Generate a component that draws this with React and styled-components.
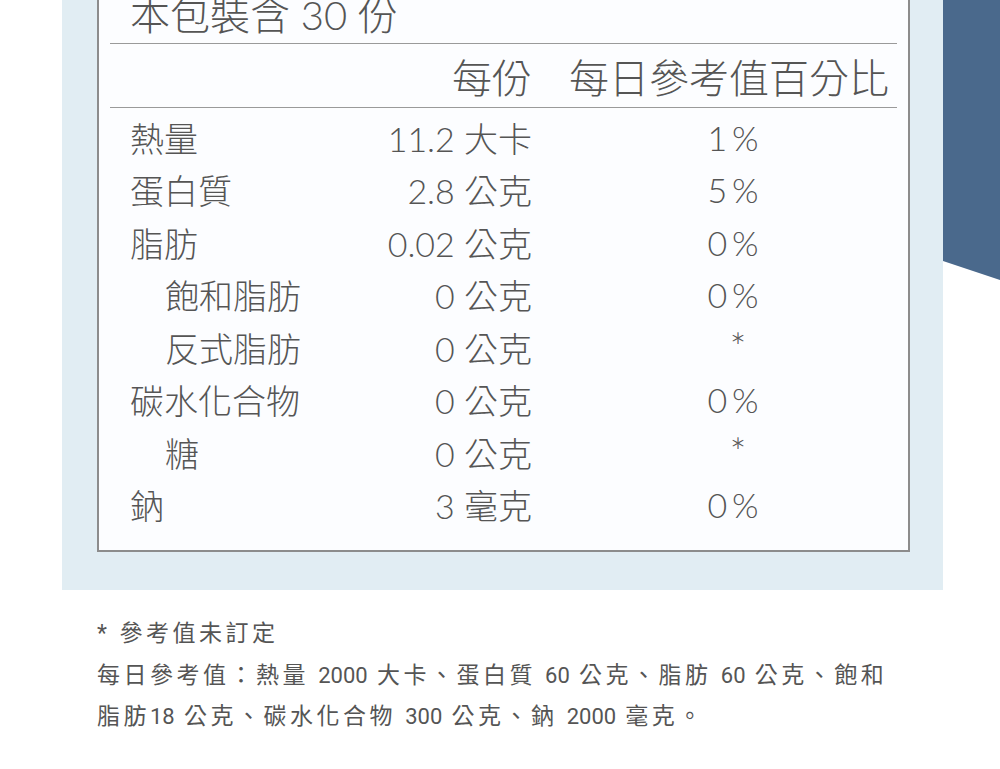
import styled, { createGlobalStyle } from 'styled-components'

const GlobalStyle = createGlobalStyle`
    html, body {
        margin: 0;
        padding: 0;
        background: #fff;
    }
    body {
        font-family: "Lato", "Noto Sans CJK TC", sans-serif;
        color: #555;
        overflow: hidden;
    }
`

const Top = styled.div`
    display: flex;
    align-items: flex-start;
`

const Panel = styled.section`
    margin-left: 62px;
    margin-top: -50px;
    width: 881px;
    flex: none;
    box-sizing: border-box;
    padding: 35px 33px 38px 35px;
    background: #e1edf3;
`

const Corner = styled.div`
    flex: 1;
    height: 280px;
    background: #4a698c;
    clip-path: polygon(0 0, 100% 0, 100% 280px, 0 261px);
`

const Label = styled.div`
    border: 2px solid #8c8c8c;
    background: #fcfdff;
    padding: 0 11px 19px;
`

const Title = styled.h2`
    margin: 0;
    padding-left: 20px;
    height: 56px;
    line-height: 56px;
    font-size: 40px;
    font-weight: 300;
    white-space: nowrap;
    border-bottom: 1px solid #9a9a9a;
`

const Grid = styled.div`
    display: grid;
    grid-template-columns: 1fr 190px 328px;
    column-gap: 37px;
    align-items: center;
`

const HeadRow = styled(Grid)`
    height: 63px;
    font-size: 40px;
    font-weight: 300;
    border-bottom: 1px solid #9a9a9a;
`

const Body = styled.div`
    padding-top: 3px;
`

const Row = styled(Grid)`
    height: 52.5px;
    font-size: 34px;
    font-weight: 300;
`

const Name = styled.span`
    padding-left: ${p => (p.$sub ? 55 : 20)}px;
    white-space: nowrap;
`

const Amount = styled.span`
    text-align: right;
    white-space: nowrap;
`

const Percent = styled.span`
    text-align: center;
    letter-spacing: 5px;
    padding-left: ${p => (p.$star ? 15 : 5)}px;
    font-size: ${p => (p.$star ? 40 : 34)}px;
`

const HeadDaily = styled.span`
    white-space: nowrap;
`

const Notes = styled.div`
    margin: 23px 0 0 97px;
    font-family: "Roboto", "Noto Sans CJK TC", sans-serif;
    font-size: 23px;
    line-height: 41.5px;
    letter-spacing: 3.5px;
    color: #555;
`

const Num = styled.span`
    font-size: 22px;
    letter-spacing: 0;
`

const rows = [
    { name: '熱量', amount: '11.2 大卡', pct: '1%' },
    { name: '蛋白質', amount: '2.8 公克', pct: '5%' },
    { name: '脂肪', amount: '0.02 公克', pct: '0%' },
    { name: '飽和脂肪', amount: '0 公克', pct: '0%', sub: true },
    { name: '反式脂肪', amount: '0 公克', pct: '*', sub: true },
    { name: '碳水化合物', amount: '0 公克', pct: '0%' },
    { name: '糖', amount: '0 公克', pct: '*', sub: true },
    { name: '鈉', amount: '3 毫克', pct: '0%' },
]

function App() {
    return (
        <>
            <GlobalStyle />
            <Top>
                <Panel>
                    <Label>
                        <Title>本包裝含 30 份</Title>
                        <HeadRow>
                            <span />
                            <Amount>每份</Amount>
                            <HeadDaily>每日參考值百分比</HeadDaily>
                        </HeadRow>
                        <Body>
                            {rows.map(r => (
                                <Row key={r.name}>
                                    <Name $sub={r.sub}>{r.name}</Name>
                                    <Amount>{r.amount}</Amount>
                                    <Percent $star={r.pct === '*'}>{r.pct}</Percent>
                                </Row>
                            ))}
                        </Body>
                    </Label>
                </Panel>
                <Corner />
            </Top>
            <Notes>
                * 參考值未訂定<br />
                每日參考值：熱量 <Num>2000</Num> 大卡、蛋白質 <Num>60</Num> 公克、脂肪 <Num>60</Num> 公克、飽和<br />
                脂肪<Num>18</Num> 公克、碳水化合物 <Num>300</Num> 公克、鈉 <Num>2000</Num> 毫克。
            </Notes>
        </>
    )
}

export default App
